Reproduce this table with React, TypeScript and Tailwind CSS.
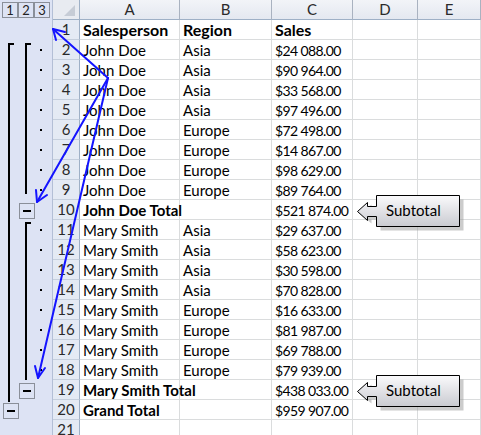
import React from "react";

type Row = { a: string; b: string; c: string; bold?: boolean; header?: boolean };

const rows: Row[] = [
  { a: "Salesperson", b: "Region", c: "Sales", bold: true, header: true },
  { a: "John Doe", b: "Asia", c: "$24 088.00" },
  { a: "John Doe", b: "Asia", c: "$90 964.00" },
  { a: "John Doe", b: "Asia", c: "$33 568.00" },
  { a: "John Doe", b: "Asia", c: "$97 496.00" },
  { a: "John Doe", b: "Europe", c: "$72 498.00" },
  { a: "John Doe", b: "Europe", c: "$14 867.00" },
  { a: "John Doe", b: "Europe", c: "$98 629.00" },
  { a: "John Doe", b: "Europe", c: "$89 764.00" },
  { a: "John Doe Total", b: "", c: "$521 874.00", bold: true },
  { a: "Mary Smith", b: "Asia", c: "$29 637.00" },
  { a: "Mary Smith", b: "Asia", c: "$58 623.00" },
  { a: "Mary Smith", b: "Asia", c: "$30 598.00" },
  { a: "Mary Smith", b: "Asia", c: "$70 828.00" },
  { a: "Mary Smith", b: "Europe", c: "$16 633.00" },
  { a: "Mary Smith", b: "Europe", c: "$81 987.00" },
  { a: "Mary Smith", b: "Europe", c: "$69 788.00" },
  { a: "Mary Smith", b: "Europe", c: "$79 939.00" },
  { a: "Mary Smith Total", b: "", c: "$438 033.00", bold: true },
  { a: "Grand Total", b: "", c: "$959 907.00", bold: true },
  { a: "", b: "", c: "" },
];

const detailRows = [2, 3, 4, 5, 6, 7, 8, 9, 11, 12, 13, 14, 15, 16, 17, 18];

function MinusBtn({ x, y }: { x: number; y: number }) {
  return (
    <g>
      <rect x={x + 0.5} y={y + 0.5} width={15} height={15} fill="#dde3f4" stroke="#8a8f99" />
      <rect x={x + 4} y={y + 7} width={8} height={2} fill="#000" />
    </g>
  );
}

function OutlinePanel() {
  const o = 20;
  return (
    <div className="w-[53px] flex flex-col bg-[#dde3f4] border-r border-[#b3bfd6] shrink-0">
      <div className="h-[20px] flex items-start pt-[2px] pl-[2px]">
        {["1", "2", "3"].map((n) => (
          <div
            key={n}
            className="w-[16px] h-[16px] border border-[#8a8f99] flex items-center justify-center text-[13px] leading-none text-[#222]"
          >
            {n}
          </div>
        ))}
      </div>
      <svg width="52" height="415" viewBox={`0 ${o} 52 415`} className="block">
        <rect x={8} y={43} width={2} height={359} fill="#000" />
        <rect x={8} y={43} width={6} height={2} fill="#000" />
        <MinusBtn x={3} y={403} />
        <rect x={25} y={43} width={2} height={151} fill="#000" />
        <rect x={25} y={43} width={6} height={2} fill="#000" />
        <MinusBtn x={19} y={203} />
        <rect x={25} y={222} width={2} height={158} fill="#000" />
        <rect x={25} y={222} width={6} height={2} fill="#000" />
        <MinusBtn x={19} y={383} />
        {detailRows.map((r) => (
          <rect key={r} x={40} y={r * 20 + 9} width={2} height={2} fill="#000" />
        ))}
      </svg>
    </div>
  );
}

const colW = ["w-[100px]", "w-[92px]", "w-[81px]", "w-[65px]", "w-[63px]"];

export default function App() {
  return (
    <div
      className="relative w-[481px] h-[435px] overflow-hidden bg-white flex text-black"
      style={{ fontFamily: "Lato, 'Open Sans', sans-serif" }}
    >
      <OutlinePanel />
      <div className="flex flex-col">
        <div className="flex h-[20px]">
          <div className="w-[27px] h-[20px] bg-[#e8ebf1] border-r border-b border-[#9eb0c6] relative shrink-0">
            <svg width="26" height="19" className="absolute left-0 top-0">
              <polygon points="22,5 22,16 11,16" fill="#c6ccd6" />
            </svg>
          </div>
          {["A", "B", "C", "D", "E"].map((l, i) => (
            <div
              key={l}
              className={`${colW[i]} h-[20px] shrink-0 bg-gradient-to-b from-[#f2f4f8] to-[#e4e8f0] border-r border-b border-r-[#a9b2c0] border-b-[#9eb0c6] flex items-center justify-center text-[15px] text-[#2a2a2a]`}
            >
              {l}
            </div>
          ))}
        </div>
        {rows.map((r, i) => (
          <div key={i} className="flex h-[20px] shrink-0">
            <div className="w-[27px] h-[20px] shrink-0 bg-[#e4eaf4] border-r border-b border-r-[#9eb0c6] border-b-[#c5cfdd] flex items-center justify-center text-[15px] text-[#2a2a2a]">
              {i + 1}
            </div>
            {[r.a, r.b, r.c, "", ""].map((t, j) => {
              const bold = r.header || (r.bold && j === 0);
              const num = j === 2 && !r.header;
              return (
                <div
                  key={j}
                  className={`${colW[j]} h-[20px] shrink-0 border-r border-b border-[#dadcdd] flex items-center pl-[3px] pt-[1px] whitespace-nowrap ${
                    num ? "text-[14px] tracking-[-0.6px]" : r.header ? "text-[16px]" : "text-[15px]"
                  } ${bold ? "font-bold" : ""}`}
                >
                  {t}
                </div>
              );
            })}
          </div>
        ))}
      </div>

      <svg width="481" height="435" className="absolute left-0 top-0 pointer-events-none">
        <g stroke="#1414ff" strokeWidth="2" fill="none" strokeLinecap="round" strokeLinejoin="round">
          <line x1="108" y1="78" x2="53" y2="29" />
          <polyline points="65,32 53,29 56,40" />
          <line x1="108" y1="78" x2="37" y2="202" />
          <polyline points="36,190 37,202 47,195" />
          <line x1="108" y1="78" x2="38" y2="378" />
          <polyline points="35,366 38,378 45,368" />
        </g>
      </svg>

      {[195, 375].map((top) => (
        <div key={top} className="absolute left-[356px] w-[110px] h-[36px]" style={{ top }}>
          <svg width="110" height="36" className="absolute left-0 top-0">
            <defs>
              <linearGradient id={`g${top}`} x1="0" y1="0" x2="0" y2="1">
                <stop offset="0" stopColor="#fafafc" />
                <stop offset="1" stopColor="#c9cad0" />
              </linearGradient>
            </defs>
            <path
              d="M22.5 2.5 H105.5 V33.5 H22.5 V22.5 H13.5 V26.5 L2.5 17 L13.5 7.5 V11.5 H22.5 Z"
              fill="#9a9a9a"
              opacity="0.5"
              transform="translate(2 2)"
            />
            <path
              d="M20.5 0.5 H103.5 V31.5 H20.5 V21.5 H11.5 V25.5 L1.5 16.5 L11.5 7.5 V11.5 H20.5 Z"
              fill={`url(#g${top})`}
              stroke="#000"
              strokeWidth="1"
            />
          </svg>
          <div className="absolute left-[30px] top-[5px] text-[15px] leading-[20px] text-black">Subtotal</div>
        </div>
      ))}
    </div>
  );
}
